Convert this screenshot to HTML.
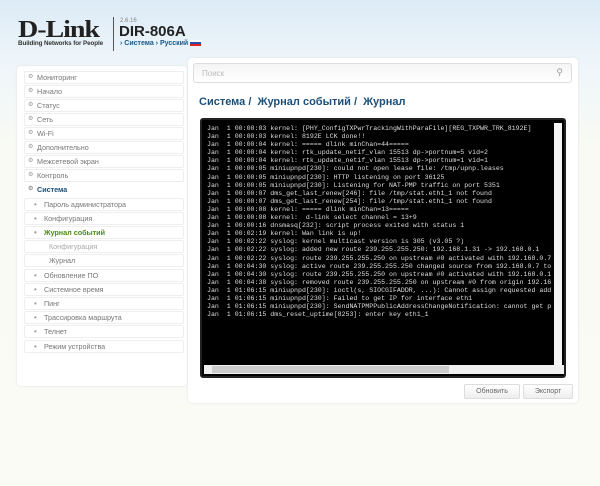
<!DOCTYPE html>
<html><head><meta charset="utf-8"><style>
*{margin:0;padding:0;box-sizing:border-box}
body{width:600px;height:486px;overflow:hidden;font-family:"Liberation Sans",sans-serif;background:linear-gradient(#dcebf6 0,#eef5fa 60px,#f9faf4 150px,#fbfbf5 100%);position:relative}
.abs{position:absolute}
.logo{left:18px;top:17px;font:bold 26px/26px "Liberation Serif",serif;color:#222;letter-spacing:-1px;transform:scale(1.08,0.95);transform-origin:left top}
.tag{left:18px;top:40px;font:bold 6.3px "Liberation Sans",sans-serif;color:#333;letter-spacing:-0.1px}
.vl{left:113px;top:17px;width:1px;height:34px;background:#555}
.ver{left:120px;top:18px;font-size:6px;color:#888}
.model{left:119px;top:23px;font:bold 15px "Liberation Sans",sans-serif;color:#222}
.crumb{left:120px;top:40px;font-size:7px;color:#1b5a8a;font-weight:bold}
.lp{left:17px;top:66px;width:170px;height:320px;background:#fff;border-radius:4px;box-shadow:0 0 2px #ddd}
.mi{position:absolute;left:24px;width:160px;height:13px;border:1px solid #eee;border-radius:2px;font-size:7.2px;color:#777;line-height:11px;padding-left:12px;background:#fff}
.mi:before{content:"⚙";position:absolute;left:3px;font-size:6px;color:#999}
.mi.s{padding-left:19px}.mi.s:before{content:"•";left:9px;font-size:8px}
.mi.ss{padding-left:24px}.mi.ss:before{content:""}
.rp{left:188px;top:58px;width:390px;height:345px;background:#fff;border-radius:4px;box-shadow:0 0 2px #ddd}
.search{left:193px;top:63px;width:379px;height:20px;border:1px solid #ddd;border-radius:3px;background:linear-gradient(#f4f4f4,#fff);font-size:8px;color:#bbb;padding:5px 8px}
.title{left:199px;top:96px;font:bold 11px "Liberation Sans",sans-serif;color:#1d4f78}
.log{left:200px;top:118px;width:366px;height:260px;background:#000;border-radius:3px;border:2px solid #222;overflow:hidden}
.log pre{position:absolute;left:5px;top:5px;font:6.6px/8.1px "Liberation Mono",monospace;color:#ddd;white-space:pre}
.vs{position:absolute;right:2px;top:3px;width:8px;height:242px;background:#f4f4f4}
.hs{position:absolute;left:2px;bottom:2px;width:360px;height:9px;background:#f0f0f0}
.hs div{position:absolute;left:8px;top:1px;width:237px;height:7px;background:#ccc}
.btn{top:384px;height:15px;border:1px solid #ddd;background:linear-gradient(#fff,#eee);font-size:7px;color:#666;text-align:center;line-height:13px;border-radius:2px}
</style></head><body>
<div class="abs logo">D-Link</div>
<div class="abs tag">Building Networks for People</div>
<div class="abs vl"></div>
<div class="abs ver">2.6.16</div>
<div class="abs model">DIR-806A</div>
<div class="abs crumb">› Система › Русский <span style="display:inline-block;width:11px;height:6px;background:linear-gradient(#fff 33%,#2a4bb0 33%,#2a4bb0 66%,#d22 66%);vertical-align:middle"></span></div>
<div class="abs lp"></div>
<div class="mi" style="top:71px">Мониторинг</div>
<div class="mi" style="top:85px">Начало</div>
<div class="mi" style="top:99px">Статус</div>
<div class="mi" style="top:113px">Сеть</div>
<div class="mi" style="top:127px">Wi-Fi</div>
<div class="mi" style="top:141px">Дополнительно</div>
<div class="mi" style="top:155px">Межсетевой экран</div>
<div class="mi" style="top:169px">Контроль</div>
<div class="mi" style="top:183px;color:#1d4f78;font-weight:bold;border-color:#fff">Система</div>
<div class="mi s" style="top:198px">Пароль администратора</div>
<div class="mi s" style="top:212px">Конфигурация</div>
<div class="mi s" style="top:226px;color:#4c8a1a;font-weight:bold">Журнал событий</div>
<div class="mi ss" style="top:240px;color:#aaa">Конфигурация</div>
<div class="mi ss" style="top:254px">Журнал</div>
<div class="mi s" style="top:269px">Обновление ПО</div>
<div class="mi s" style="top:283px">Системное время</div>
<div class="mi s" style="top:297px">Пинг</div>
<div class="mi s" style="top:311px">Трассировка маршрута</div>
<div class="mi s" style="top:325px">Телнет</div>
<div class="mi s" style="top:340px">Режим устройства</div>
<div class="abs rp"></div>
<div class="abs search">Поиск<span style="position:absolute;right:8px;top:3px;color:#999;font-size:9px">&#9906;</span></div>
<div class="abs title">Система /&nbsp; Журнал событий /&nbsp; Журнал</div>
<div class="abs log"><pre>Jan  1 00:00:03 kernel: [PHY_ConfigTXPwrTrackingWithParaFile][REG_TXPWR_TRK_8192E]
Jan  1 00:00:03 kernel: 8192E LCK done!!
Jan  1 00:00:04 kernel: ===== dlink minChan=44=====
Jan  1 00:00:04 kernel: rtk_update_netif_vlan 15513 dp->portnum=5 vid=2
Jan  1 00:00:04 kernel: rtk_update_netif_vlan 15513 dp->portnum=1 vid=1
Jan  1 00:00:05 miniupnpd[230]: could not open lease file: /tmp/upnp.leases
Jan  1 00:00:05 miniupnpd[230]: HTTP listening on port 36125
Jan  1 00:00:05 miniupnpd[230]: Listening for NAT-PMP traffic on port 5351
Jan  1 00:00:07 dms_get_last_renew[246]: file /tmp/stat.eth1_1 not found
Jan  1 00:00:07 dms_get_last_renew[254]: file /tmp/stat.eth1_1 not found
Jan  1 00:00:08 kernel: ===== dlink minChan=13=====
Jan  1 00:00:08 kernel:  d-link select channel = 13+9
Jan  1 00:00:16 dnsmasq[232]: script process exited with status 1
Jan  1 00:02:19 kernel: Wan link is up!
Jan  1 00:02:22 syslog: kernel multicast version is 305 (v3.05 ?)
Jan  1 00:02:22 syslog: added new route 239.255.255.250: 192.168.1.31 -> 192.168.0.1
Jan  1 00:02:22 syslog: route 239.255.255.250 on upstream #0 activated with 192.168.0.7
Jan  1 00:04:30 syslog: active route 239.255.255.250 changed source from 192.168.0.7 to
Jan  1 00:04:30 syslog: route 239.255.255.250 on upstream #0 activated with 192.168.0.1
Jan  1 00:04:38 syslog: removed route 239.255.255.250 on upstream #0 from origin 192.16
Jan  1 01:06:15 miniupnpd[230]: ioctl(s, SIOCGIFADDR, ...): Cannot assign requested add
Jan  1 01:06:15 miniupnpd[230]: Failed to get IP for interface eth1
Jan  1 01:06:15 miniupnpd[230]: SendNATPMPPublicAddressChangeNotification: cannot get p
Jan  1 01:06:15 dms_reset_uptime[8253]: enter key eth1_1</pre><div class="vs"></div><div class="hs"><div></div></div></div>
<div class="abs btn" style="left:464px;width:56px">Обновить</div>
<div class="abs btn" style="left:523px;width:50px">Экспорт</div>
</body></html>
